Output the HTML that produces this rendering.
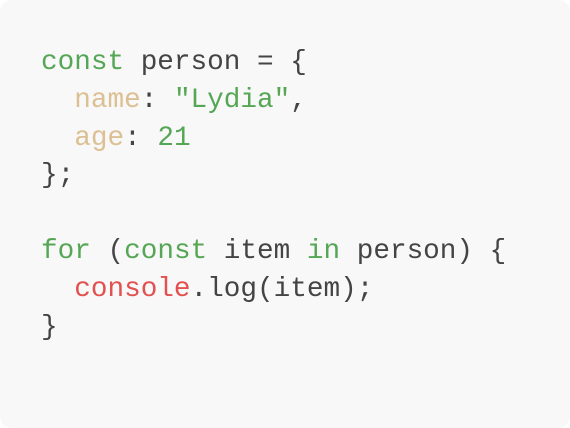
<html><head><style>
body{margin:0;background:#fff;width:570px;height:428px}
.b{position:absolute;left:0;top:0;width:570px;height:428px;background:#f8f8f8;border-radius:12px}
pre{position:absolute;left:41px;top:44px;margin:0;font-family:"Liberation Mono",monospace;font-size:27.7px;line-height:37.8px;color:#444}
.g{color:#55a655}.t{color:#dcc094}.r{color:#e35050}
</style></head><body><div class="b"><pre><span class="g">const</span> person = {
  <span class="t">name</span>: <span class="g">"Lydia"</span>,
  <span class="t">age</span>: <span class="g">21</span>
};

<span class="g">for</span> (<span class="g">const</span> item <span class="g">in</span> person) {
  <span class="r">console</span>.log(item);
}</pre></div></body></html>
